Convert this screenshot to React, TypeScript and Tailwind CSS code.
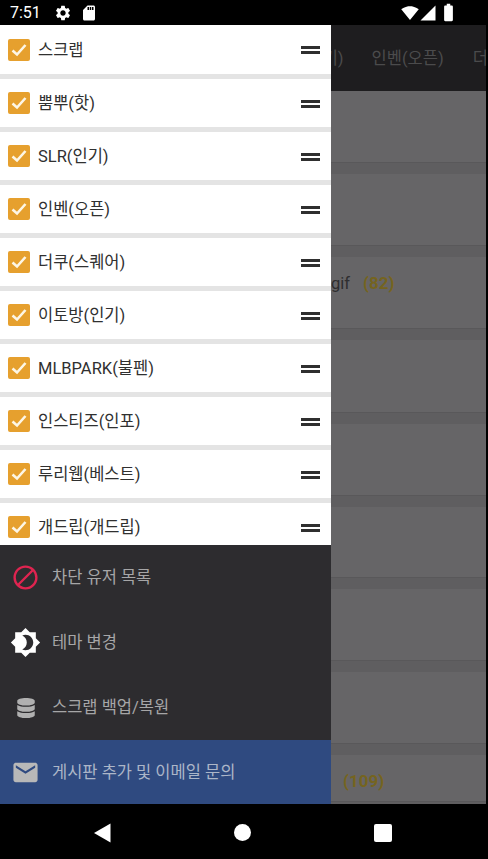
import { FaDatabase } from "react-icons/fa";
import {
  MdBatteryFull,
  MdBlock,
  MdBrightness4,
  MdEmail,
  MdSdCard,
  MdSettings,
  MdSignalCellular4Bar,
  MdSignalWifi4Bar,
} from "react-icons/md";

const boards = [
  "스크랩",
  "뿜뿌(핫)",
  "SLR(인기)",
  "인벤(오픈)",
  "더쿠(스퀘어)",
  "이토방(인기)",
  "MLBPARK(불펜)",
  "인스티즈(인포)",
  "루리웹(베스트)",
  "개드립(개드립)",
];

const cards = [
  { h: "h-[72px]" },
  { h: "h-[72px]" },
  { h: "h-[72px]", title: "gif", count: "(82)", left: "ml-[331px]" },
  { h: "h-[73px]" },
  { h: "h-[72px]" },
  { h: "h-[71px]" },
  { h: "h-[72px]" },
  { h: "h-[72px]" },
  { h: "h-[47px]", count: "(109)", left: "ml-[343px]" },
];

function BoardRow({ name, first }: { name: string; first: boolean }) {
  return (
    <div
      className={`shrink-0 ${first ? "h-[49px]" : "h-[48px]"} bg-white flex items-center pl-2 pr-[11px]`}
    >
      <div className="w-[22px] h-[22px] rounded-[2px] bg-[#e6a02e] flex items-center justify-center shrink-0">
        <svg width="16" height="14" viewBox="0 0 16 14" fill="none">
          <path d="M1.5 7.5L6 11.5L14.5 2" stroke="#fdf6e6" strokeWidth="2.6" />
        </svg>
      </div>
      <span className="ml-2 pt-[3px] text-[16.5px] text-[#303030] flex-1">{name}</span>
      <div className="flex flex-col gap-[2px] pt-[1px]">
        <div className="w-[19px] h-[3px] bg-[#2f2f2f]" />
        <div className="w-[19px] h-[3px] bg-[#2f2f2f]" />
      </div>
    </div>
  );
}

function MenuRow({
  icon,
  label,
  blue,
}: {
  icon: React.ReactNode;
  label: string;
  blue?: boolean;
}) {
  return (
    <div
      className={`h-[65px] flex items-center shrink-0 ${
        blue ? "bg-[#2f4a80] text-[#acb6c8]" : "text-[#a6a6a7]"
      }`}
    >
      <div className="w-[52px] flex items-center justify-center pr-[1px] shrink-0">
        {icon}
      </div>
      <span className="text-[16.5px] pt-[2px]">{label}</span>
    </div>
  );
}

export default function App() {
  return (
    <div className="w-[488px] h-[859px] bg-black flex flex-col overflow-hidden font-['Roboto','Noto_Sans_CJK_KR',sans-serif]">
      {/* Status bar */}
      <div className="h-[25px] shrink-0 flex items-center pl-[10px] pr-[29px] text-white">
        <span className="text-[16px] w-[44px]">7:51</span>
        <MdSettings size={18} />
        <MdSdCard size={18} className="ml-[8px]" />
        <div className="flex-1" />
        <MdSignalWifi4Bar size={18} />
        <MdSignalCellular4Bar size={18} />
        <MdBatteryFull size={21} className="ml-[1px]" />
      </div>

      <div className="flex-1 relative min-h-0 overflow-hidden">
        {/* Dimmed screen behind the drawer */}
        <div className="h-full mr-[2px] bg-[#5f5e60]">
          <div className="h-[66px] bg-[#1e1d1f] text-[#4b4b4c] text-[16.5px] flex items-center gap-[28px] pl-[273px] pt-[2px] overflow-hidden whitespace-nowrap">
            <span>SLR(인기)</span>
            <span>인벤(오픈)</span>
            <span className="ml-[1px]">더쿠(스퀘어)</span>
          </div>
          <div className="flex flex-col gap-[11px]">
            {cards.map((card, i) => (
              <div
                key={i}
                className={`${card.h} bg-[#666567] border-b border-[#59585a] flex items-start pt-[14px]`}
              >
                {(card.title || card.count) && (
                  <div className={`${card.left} flex items-baseline`}>
                    {card.title && (
                      <span className="text-[16.5px] text-[#2e2e2f] mr-[13px]">
                        {card.title}
                      </span>
                    )}
                    <span className="text-[17px] font-bold text-[#75641f]">
                      {card.count}
                    </span>
                  </div>
                )}
              </div>
            ))}
          </div>
        </div>

        {/* Drawer */}
        <div className="absolute left-0 top-0 bottom-0 w-[331px] flex flex-col bg-[#2d2c2f]">
          <div className="h-[520px] shrink-0 overflow-hidden flex flex-col gap-[5px] bg-[#e4e4e4]">
            {boards.map((b, i) => (
              <BoardRow key={b} name={b} first={i === 0} />
            ))}
          </div>
          <MenuRow
            icon={<MdBlock size={29} className="text-[#df2450]" />}
            label="차단 유저 목록"
          />
          <MenuRow
            icon={<MdBrightness4 size={31} className="text-white" />}
            label="테마 변경"
          />
          <MenuRow
            icon={<FaDatabase size={20} className="text-[#b0b0b0]" />}
            label="스크랩 백업/복원"
          />
          <MenuRow
            blue
            icon={<MdEmail size={29} className="text-[#b8b8b8]" />}
            label="게시판 추가 및 이메일 문의"
          />
        </div>
      </div>

      {/* Nav bar */}
      <div className="h-[55px] shrink-0 flex items-center justify-center gap-[123px] pt-[2px] pr-[4px]">
        <svg width="18" height="20" viewBox="0 0 18 20">
          <path d="M17.5 0.5V19.5L1 10Z" fill="#fff" />
        </svg>
        <div className="w-[17px] h-[17px] rounded-full bg-white" />
        <div className="w-[18px] h-[18px] rounded-[2px] bg-white" />
      </div>
    </div>
  );
}
